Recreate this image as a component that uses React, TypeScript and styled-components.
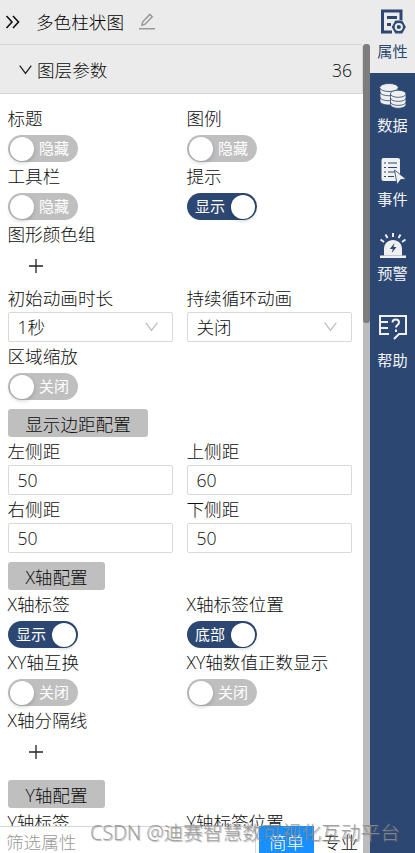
import React from 'react';
import styled, { createGlobalStyle, css } from 'styled-components';

const GlobalStyle = createGlobalStyle`
  *, *::before, *::after { box-sizing: border-box; }
  html, body { margin: 0; height: 100%; overflow: hidden; }
  body {
    font-family: "Open Sans", "Noto Sans CJK SC", sans-serif;
    font-weight: 300;
    font-size: 17.6px;
    color: #0c0c0c;
    background: #fff;
  }
`;

const Screen = styled.div`
  position: relative;
  display: flex;
  width: 415px;
  height: 853px;
  overflow: hidden;
`;

const Main = styled.main`
  display: flex;
  flex-direction: column;
  width: 370px;
  height: 100%;
`;

const Header = styled.header`
  display: flex;
  align-items: center;
  flex: none;
  height: 44px;
  padding-left: 5px;
  background: #ebebeb;
  color: #000;
`;

const Title = styled.h1`
  margin: 0 0 0 16px;
  font-size: 17.6px;
  line-height: 44px;
  font-weight: 300;
`;

const EditIcon = styled.svg`
  margin: -1px 0 0 15px;
`;

const Body = styled.div`
  display: flex;
  flex: 1;
  min-height: 0;
`;

const Column = styled.div`
  display: flex;
  flex-direction: column;
  width: 363px;
`;

const Scroller = styled.div`
  flex: 1;
  min-height: 0;
  overflow: hidden;
`;

const ScrollTrack = styled.div`
  width: 7px;
  background: linear-gradient(#ebebeb 0 12px, #bcbcbc 12px);
`;

const ScrollThumb = styled.div`
  width: 7px;
  height: 279px;
  border-radius: 3px;
  background: #7d7d7d;
`;

const GroupHeader = styled.div`
  display: flex;
  align-items: center;
  height: 50px;
  padding: 2px 10px 0 19px;
  border: 1px solid #d6d6d6;
  border-left: 0;
  border-radius: 0 2px 0 0;
  background: #ebebeb;
`;

const GroupName = styled.span`
  flex: 1;
  margin-left: 5px;
  line-height: 26px;
`;

const Count = styled.span`
  line-height: 26px;
`;

const Fields = styled.div`
  display: flex;
  flex-direction: column;
  padding: 11px 11px 0 8px;
`;

const Row = styled.div<{ $height?: number }>`
  display: grid;
  flex: none;
  grid-template-columns: 165px 165px;
  column-gap: 14px;
  height: ${(p) => p.$height ?? 58}px;
`;

const Field = styled.div`
  display: flex;
  flex-direction: column;
  align-items: flex-start;
`;

const Label = styled.div`
  height: 27px;
  margin-left: -0.5px;
  line-height: 27px;
  white-space: nowrap;
`;

const Switch = styled.button<{ $on?: boolean }>`
  display: flex;
  align-items: center;
  flex-direction: ${(p) => (p.$on ? 'row' : 'row-reverse')};
  justify-content: space-between;
  width: 70px;
  height: 27px;
  margin: 3px 0 0;
  padding: ${(p) => (p.$on ? '0 2px 0 8px' : '0 9px 0 2px')};
  border: 0;
  border-radius: 14px;
  background: ${(p) => (p.$on ? '#2c4772' : '#bfbfbf')};
  color: #fff;
  font: 400 15px/27px "Open Sans", "Noto Sans CJK SC", sans-serif;
`;

const Knob = styled.span`
  width: 24px;
  height: 24px;
  border-radius: 50%;
  background: #fff;
  box-shadow: 0 2px 4px rgba(0, 35, 11, 0.2);
`;

const boxed = css`
  width: 165px;
  height: 30px;
  border: 1px solid #d9d9d9;
  border-radius: 2px;
  background: #fff;
`;

const Select = styled.div`
  ${boxed}
  display: flex;
  align-items: center;
  justify-content: space-between;
  padding: 0 14px 0 8.5px;
  line-height: 28px;
`;

const Input = styled.input`
  ${boxed}
  padding: 0 8.5px;
  outline: 0;
  font: inherit;
  color: inherit;
`;

const AddButton = styled.button`
  display: flex;
  margin: 11px 0 0 21px;
  padding: 0;
  border: 0;
  background: none;
`;

const Section = styled.div<{ $width: number }>`
  flex: none;
  width: ${(p) => p.$width}px;
  height: 28px;
  margin: 8px 0 1px;
  border-radius: 3px;
  background: #bfbfbf;
  line-height: 31px;
  text-align: center;
`;

const Footer = styled.footer`
  display: flex;
  flex: none;
  height: 27px;
  border-top: 1px solid #d4d4d4;
  line-height: 31px;
`;

const Filter = styled.div`
  width: 256px;
  margin-right: 3px;
  padding-left: 6px;
  border-right: 1px solid #d9d9d9;
  color: #999;
`;

const Mode = styled.div<{ $active?: boolean }>`
  width: ${(p) => (p.$active ? 55 : 49)}px;
  margin-top: -1px;
  padding-left: ${(p) => (p.$active ? 10 : 9)}px;
  background: ${(p) => (p.$active ? '#1890ff' : '#fff')};
  color: ${(p) => (p.$active ? '#fff' : '#0c0c0c')};
  line-height: 33px;
`;

const Sidebar = styled.nav`
  display: flex;
  flex-direction: column;
  width: 45px;
  background: #2c4772;
`;

const Tab = styled.div<{ $active?: boolean; $height: number }>`
  display: flex;
  flex-direction: column;
  align-items: center;
  justify-content: flex-end;
  height: ${(p) => p.$height}px;
  padding-bottom: 12px;
  background: ${(p) => (p.$active ? '#ebebeb' : '#2c4772')};
  color: ${(p) => (p.$active ? '#2c4772' : '#f2f4f7')};
  font-size: 15.2px;
  font-weight: 400;
  line-height: 20px;
`;

const TabIcon = styled.svg<{ $gap?: number }>`
  margin-bottom: ${(p) => p.$gap ?? 6}px;
`;

const Watermark = styled.div`
  position: absolute;
  left: 90px;
  bottom: 6px;
  color: rgba(145, 145, 145, 0.85);
  font-size: 19.7px;
  line-height: 28px;
  white-space: nowrap;
  text-shadow: 1px 1px 1px rgba(110, 110, 110, 0.5);
  pointer-events: none;
`;

const Chevron = ({ color = '#bfbfbf' }: { color?: string }) => (
  <svg width="13" height="10" viewBox="0 0 13 10" fill="none" stroke={color} strokeWidth="1.3">
    <path d="M.7.7 6.5 8.4 12.3.7" />
  </svg>
);

const Add = () => (
  <AddButton aria-label="add">
    <svg width="14" height="14" viewBox="0 0 14 14" stroke="#222" strokeWidth="1.3">
      <path d="M7 0v14M0 7h14" />
    </svg>
  </AddButton>
);

const Toggle = ({ label, text, on }: { label: string; text: string; on?: boolean }) => (
  <Field>
    <Label>{label}</Label>
    <Switch $on={on}>
      <span>{text}</span>
      <Knob />
    </Switch>
  </Field>
);

const Choice = ({ label, value }: { label: string; value: string }) => (
  <Field>
    <Label>{label}</Label>
    <Select>
      {value}
      <Chevron />
    </Select>
  </Field>
);

const NumberField = ({ label, value }: { label: string; value: string }) => (
  <Field>
    <Label>{label}</Label>
    <Input defaultValue={value} />
  </Field>
);

const AddField = ({ label }: { label: string }) => (
  <Field>
    <Label>{label}</Label>
    <Add />
  </Field>
);

export default function App() {
  return (
    <>
      <GlobalStyle />
      <Screen>
        <Main>
          <Header>
            <svg width="15" height="14" viewBox="0 0 15 14" fill="none" stroke="#111" strokeWidth="1.6">
              <path d="M1.5 1 7 7l-5.500 6M8 1l5.500 6L8 13" />
            </svg>
            <Title>多色柱状图</Title>
            <EditIcon width="16" height="17" viewBox="0 0 16 17" fill="none" stroke="#999" strokeWidth="1.5">
              <path d="M3 12.200 3.700 8.800 10.800 1.400 13.200 3.700 6.100 11.200zM0 15.700h16" />
            </EditIcon>
          </Header>
          <Body>
            <Column>
              <Scroller>
                <GroupHeader>
                  <Chevron color="#222" />
                  <GroupName>图层参数</GroupName>
                  <Count>36</Count>
                </GroupHeader>
                <Fields>
                  <Row>
                    <Toggle label="标题" text="隐藏" />
                    <Toggle label="图例" text="隐藏" />
                  </Row>
                  <Row>
                    <Toggle label="工具栏" text="隐藏" />
                    <Toggle label="提示" text="显示" on />
                  </Row>
                  <Row $height={64}>
                    <AddField label="图形颜色组" />
                  </Row>
                  <Row>
                    <Choice label="初始动画时长" value="1秒" />
                    <Choice label="持续循环动画" value="关闭" />
                  </Row>
                  <Row>
                    <Toggle label="区域缩放" text="关闭" />
                  </Row>
                  <Section $width={140}>显示边距配置</Section>
                  <Row>
                    <NumberField label="左侧距" value="50" />
                    <NumberField label="上侧距" value="60" />
                  </Row>
                  <Row>
                    <NumberField label="右侧距" value="50" />
                    <NumberField label="下侧距" value="50" />
                  </Row>
                  <Section $width={97}>X轴配置</Section>
                  <Row>
                    <Toggle label="X轴标签" text="显示" on />
                    <Toggle label="X轴标签位置" text="底部" on />
                  </Row>
                  <Row>
                    <Toggle label="XY轴互换" text="关闭" />
                    <Toggle label="XY轴数值正数显示" text="关闭" />
                  </Row>
                  <Row $height={65}>
                    <AddField label="X轴分隔线" />
                  </Row>
                  <Section $width={97}>Y轴配置</Section>
                  <Row>
                    <Toggle label="Y轴标签" text="显示" on />
                    <Toggle label="Y轴标签位置" text="底部" on />
                  </Row>
                </Fields>
              </Scroller>
              <Footer>
                <Filter>筛选属性</Filter>
                <Mode $active>简单</Mode>
                <Mode>专业</Mode>
              </Footer>
            </Column>
            <ScrollTrack>
              <ScrollThumb />
            </ScrollTrack>
          </Body>
        </Main>
        <Sidebar>
          <Tab $active $height={73}>
            <TabIcon width="26" height="26" viewBox="0 0 26 26" fill="none" stroke="#2c4772">
              <path d="M12 23H2.500V2H21v9" strokeWidth="3" />
              <path d="M7 8.500h10M7 15.500h4" strokeWidth="3" />
              <path d="M15.600 12.200h6.400l3.200 5.800-3.200 5.800h-6.400L12.400 18z" fill="#2c4772" strokeWidth="1.200" strokeLinejoin="round" />
              <circle cx="18.800" cy="18" r="3.100" fill="#2c4772" stroke="#ebebeb" strokeWidth="2" />
            </TabIcon>
            属性
          </Tab>
          <Tab $height={74}>
            <TabIcon width="28" height="26" viewBox="0 0 28 26" fill="#f0f0f0" stroke="#2c4772" strokeWidth=".8">
              <path d="M1 4v14c0 2.500 4 4 9 4s9-1.500 9-4V4" />
              <ellipse cx="10" cy="4.500" rx="9.300" ry="4" />
              <path d="M1 9c0 5 18 5 18 0M1 14c0 5 18 5 18 0" fill="none" />
              <path d="M11.500 11v10.500c0 5 15.500 5 15.500 0V11" />
              <ellipse cx="19.200" cy="10.800" rx="7.800" ry="3.500" />
              <path d="M11.500 15c0 4.500 15.500 4.500 15.500 0M11.500 19c0 4.500 15.500 4.500 15.500 0" fill="none" />
            </TabIcon>
            数据
          </Tab>
          <Tab $height={74}>
            <TabIcon $gap={4} width="26" height="27" viewBox="0 0 26 27">
              <rect x="1.500" y="0" width="18.500" height="23" rx="2" fill="#f0f0f0" />
              <path d="M8 5h9M8 9.500h9M8 14h7M8 18.500h6M4 5h2M4 9.500h2M4 14h2M4 18.500h2" stroke="#2c4772" strokeWidth="1.200" />
              <path d="m14.500 12 11.500 9-5.300.6-3.500 5.100z" fill="#f0f0f0" stroke="#2c4772" strokeWidth=".8" />
            </TabIcon>
            事件
          </Tab>
          <Tab $height={74}>
            <TabIcon $gap={4} width="26" height="26" viewBox="0 0 26 26" fill="#f0f0f0">
              <path d="M4 22.500V16c0-5.500 4-9 9-9s9 3.500 9 9v6.500z" />
              <path d="M0 22.500h26V25H0z" />
              <path d="M13 0v4M5.500 1.500l2 3.500M20.500 1.500l-2 3.500M.5 6.500l3.500 2.500M25.500 6.500 22 9" stroke="#f0f0f0" strokeWidth="2" />
              <path d="m14.500 10-4.700 6h3l-1 4 4.700-6h-3z" fill="#2c4772" />
            </TabIcon>
            预警
          </Tab>
          <Tab $height={87}>
            <TabIcon $gap={10} width="28" height="25" viewBox="0 0 28 25" fill="none" stroke="#f0f0f0" strokeWidth="2">
              <path d="M10 19H1V1h26v18h-7l-5 5M1 7h8M1 13h8" />
              <path d="M13.500 7.500c0-4 6.500-4 6.500 0 0 2.500-3 2.500-3 5M17 14.500V17" />
            </TabIcon>
            帮助
          </Tab>
        </Sidebar>
        <Watermark>CSDN @迪赛智慧数可视化互动平台</Watermark>
      </Screen>
    </>
  );
}
